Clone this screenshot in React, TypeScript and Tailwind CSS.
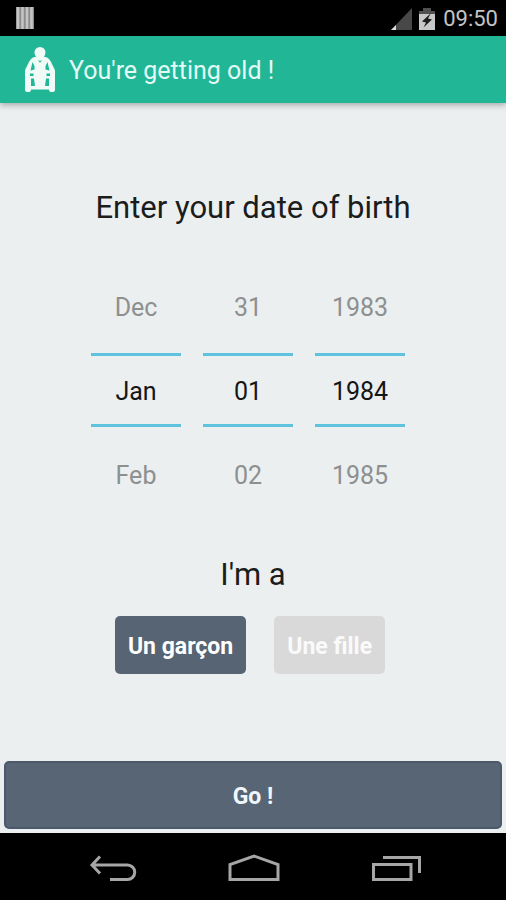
import { useState } from "react";
import clsx from "clsx";

const MONTHS = ["Jan", "Feb", "Mar", "Apr", "May", "Jun", "Jul", "Aug", "Sep", "Oct", "Nov", "Dec"];
const DAYS = Array.from({ length: 31 }, (_, i) => String(i + 1).padStart(2, "0"));
const YEARS = Array.from({ length: 120 }, (_, i) => String(1900 + i));

function StatusBar() {
  return (
    <div className="flex h-9 items-center bg-black pl-4 pr-2">
      <svg width="18" height="22" viewBox="0 0 18 22" aria-hidden="true">
        <rect width="18" height="22" fill="#8c8c8c" />
        <path d="M2 0v22M6.500 0v22M11 0v22M15.500 0v22" stroke="#c4c4c4" strokeWidth="2.6" />
      </svg>
      <div className="ml-auto flex items-center pt-0.5">
        <svg width="22" height="24" viewBox="0 0 22 24" aria-hidden="true">
          <path d="M0 23L21 1v22z" fill="#484848" />
          <path d="M0 23L5 18V23z" fill="#dedede" />
        </svg>
        <svg className="ml-1.5" width="16" height="22" viewBox="0 0 16 22" aria-hidden="true">
          <path d="M4 0h8v3h4v4H0V3h4z" fill="#505050" />
          <path d="M0 6h16v16H0z" fill="#c8c8c8" />
          <path d="M12 5L3 13.500l4 1L4.500 19.500l8.500-8-4-1z" fill="#1c1c1c" />
        </svg>
        <span className="ml-2 text-[22px] leading-9 text-[#c4c4c4]">09:50</span>
      </div>
    </div>
  );
}

function WheelchairIcon() {
  return (
    <svg width="32" height="46" viewBox="0 0 32 46" aria-hidden="true">
      <circle cx="16" cy="5.500" r="5.500" fill="#f0faf7" />
      {/* seated figure with the wheels on both sides */}
      <path
        d="M9 10.500q7-2.500 14 0Q26 12 28 17l2.500 5q1 2 .5 5v16q0 2-2 2h-2q-2 0-2-2.500H7Q7 45 5 45H3q-2 0-2-2V27q-.5-3 .5-5L4 17q2-5 5-6.500z"
        fill="#f0faf7"
      />
      {/* gaps between arms, legs and frame */}
      <g fill="#20b696">
        <path d="M8.500 15l2 4v3.500l-4 1zM23.500 15l-2 4v3.500l4 1z" />
        <path d="M6 26.500h3.500V29H6zM22.500 26.500H26V29h-3.500z" />
        <path d="M7 31.500h3l1 7.500H7zM25 31.500h-3L21 39h4z" />
        <path d="M14 13l2 3 2-3-2 1z" />
      </g>
    </svg>
  );
}

interface NumberPickerProps {
  label: string;
  values: string[];
  initial: string;
}

function NumberPicker({ label, values, initial }: NumberPickerProps) {
  const [index, setIndex] = useState(values.indexOf(initial));
  const prev = (index - 1 + values.length) % values.length;
  const next = (index + 1) % values.length;

  return (
    <div className="flex w-[90px] flex-col text-[25px]">
      <button type="button" className="h-24 pt-1.5 text-[#8e9090]" onClick={() => setIndex(prev)}>
        {values[prev]}
      </button>
      <input
        className="h-[74px] w-full border-y-3 border-[#5fc3e0] bg-transparent pt-0.5 text-center text-[#151616] outline-none"
        aria-label={label}
        value={values[index]}
        readOnly
      />
      <button type="button" className="h-24 pt-0.5 text-[#8e9090]" onClick={() => setIndex(next)}>
        {values[next]}
      </button>
    </div>
  );
}

function NavigationBar() {
  return (
    <nav className="flex h-[67px] items-center justify-center gap-[90px] bg-black pl-1 pt-1">
      <button type="button" aria-label="Back">
        <svg width="50" height="30" viewBox="0 0 50 30" fill="none" stroke="#a6a6a6" strokeWidth="3">
          <path d="M12 2.500L4 11l8 8.500M4 11h35.500a7 7 0 0 1 0 14.500H22" />
        </svg>
      </button>
      <button type="button" aria-label="Home">
        <svg width="54" height="30" viewBox="0 0 54 30" fill="none" stroke="#a6a6a6" strokeWidth="3">
          <path d="M2 25.500V10.500L26 2l24 8.500v15z" />
        </svg>
      </button>
      <button type="button" aria-label="Recent apps">
        <svg width="50" height="30" viewBox="0 0 50 30" fill="none" stroke="#a6a6a6" strokeWidth="3">
          <path d="M1.500 10.500h37.500v15H1.500zM11 3.500h36.500V19" />
        </svg>
      </button>
    </nav>
  );
}

export default function App() {
  const [gender, setGender] = useState("boy");

  const genderClass = (value: string) =>
    clsx(
      "h-[58px] rounded-[5px] px-[13px] pt-1 text-[23px] font-bold",
      gender === value ? "bg-[#566473] text-white" : "bg-[#d9d9d9] text-[#fafafa]"
    );

  return (
    <div className="flex min-h-screen flex-col bg-[#ebeff0] font-['Roboto',sans-serif]">
      <StatusBar />

      <header className="z-10 flex h-[67px] items-center bg-[#20b696] pl-6 shadow-[0_2px_6px_rgba(0,0,0,0.3)]">
        <WheelchairIcon />
        <h1 className="ml-[13px] pt-0.5 text-[25px] text-[#e4faf5]">You're getting old !</h1>
      </header>

      <main className="flex flex-1 flex-col items-center px-1 pb-1">
        <h2 className="mt-[85px] text-[31px] leading-10 text-[#1b1c1c]">Enter your date of birth</h2>

        <div className="mt-[29px] flex gap-[22px] pr-[10px]">
          <NumberPicker label="Month" values={MONTHS} initial="Jan" />
          <NumberPicker label="Day" values={DAYS} initial="01" />
          <NumberPicker label="Year" values={YEARS} initial="1984" />
        </div>

        <h2 className="mt-8 text-[31px] leading-10 text-[#1b1c1c]">I'm a</h2>

        <div className="mt-[21px] flex gap-7 pr-[6px]">
          <button type="button" className={genderClass("boy")} onClick={() => setGender("boy")}>
            Un garçon
          </button>
          <button type="button" className={genderClass("girl")} onClick={() => setGender("girl")}>
            Une fille
          </button>
        </div>

        <button
          type="button"
          className="mt-auto h-[68px] w-full rounded-[5px] border-2 border-[#4b596b] bg-[#586574] pt-1 text-[23px] font-bold text-[#f0f7fc]"
        >
          Go !
        </button>
      </main>

      <NavigationBar />
    </div>
  );
}
